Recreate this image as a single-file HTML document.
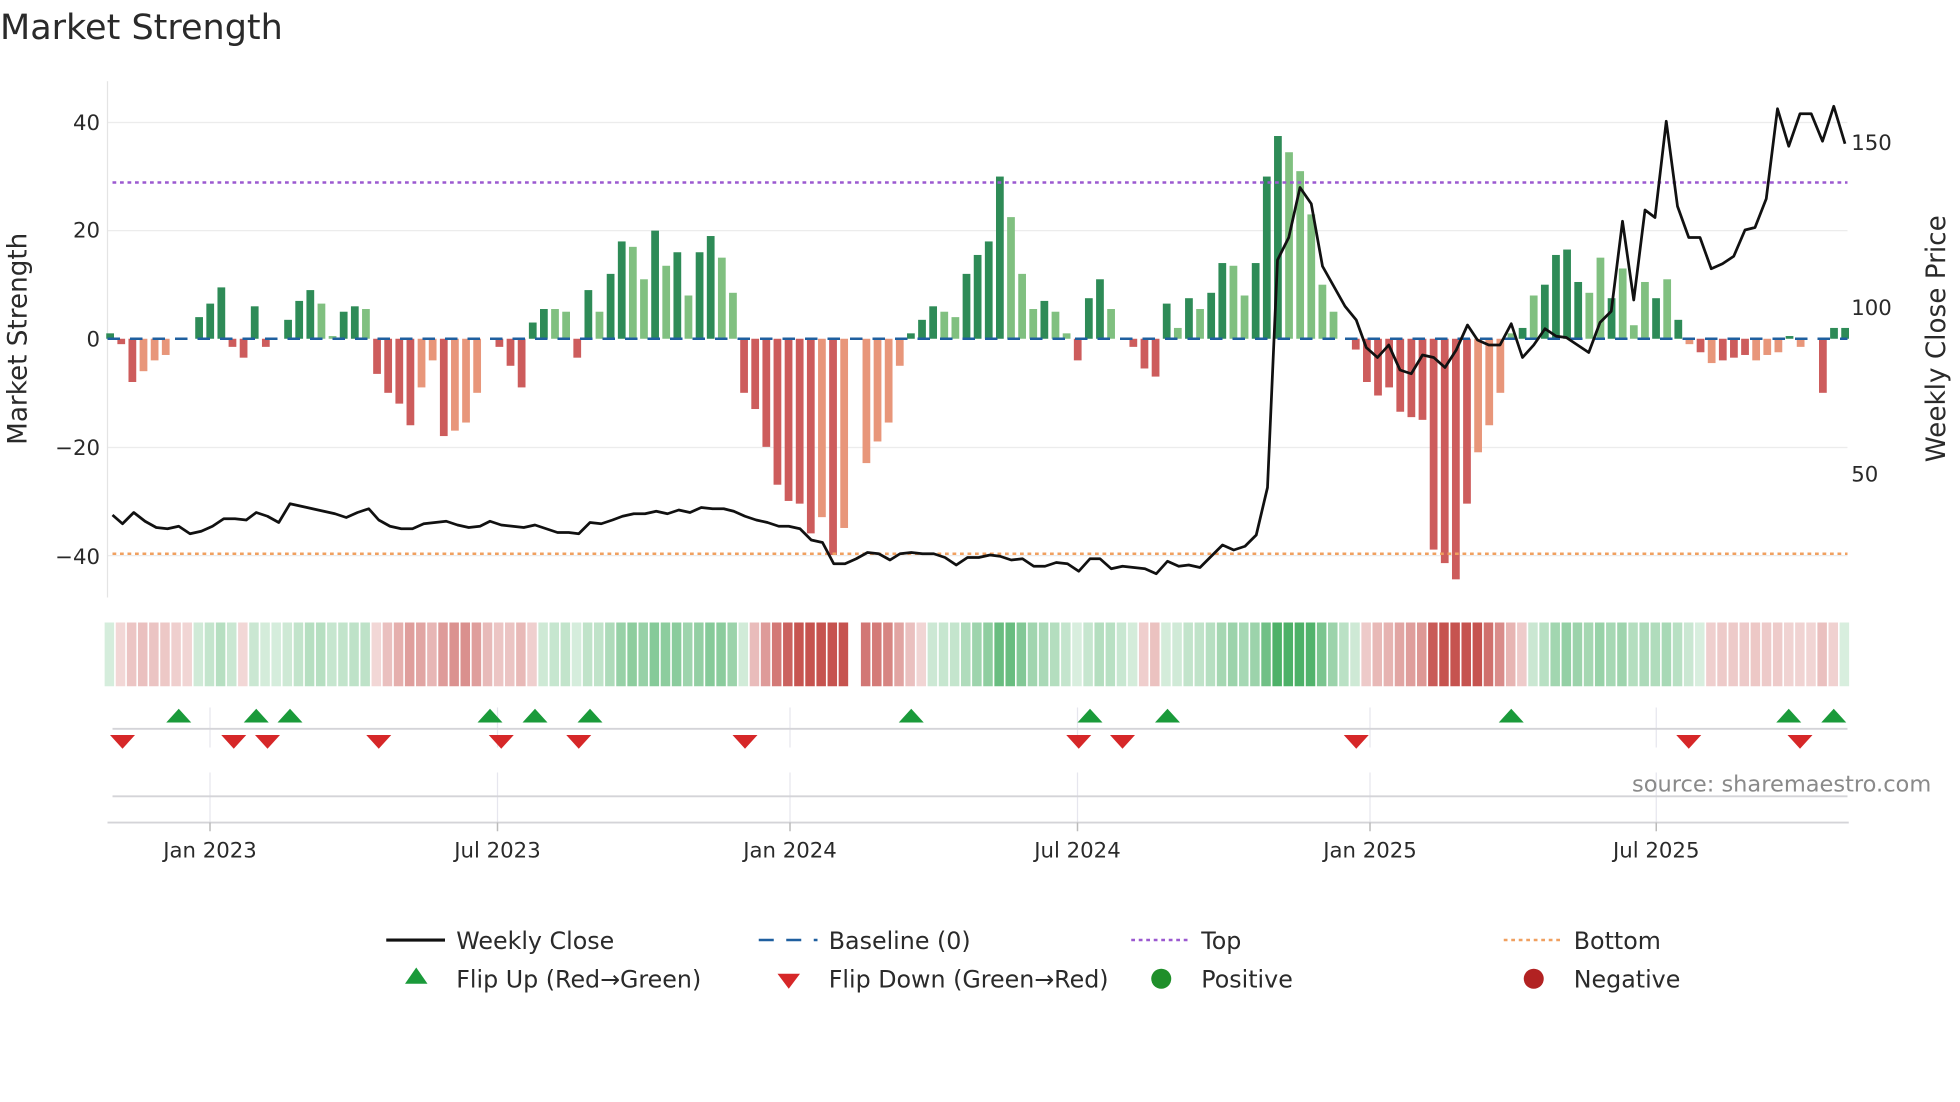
<!DOCTYPE html>
<html><head><meta charset="utf-8">
<style>
html,body{margin:0;padding:0;background:#fff;width:1960px;height:1102px;overflow:hidden}
svg{display:block}
text{font-family:"DejaVu Sans","Liberation Sans",sans-serif;fill:#2a2a2a}
</style></head>
<body>
<svg id="s" width="1960" height="1102" viewBox="0 0 1568 881.6" xmlns="http://www.w3.org/2000/svg">
<rect width="1568" height="882" fill="#fff"/>
<text x="0" y="31" font-size="28" fill="#333">Market Strength</text>
<g stroke="#ececec" stroke-width="1">
<line x1="86" y1="98" x2="1478" y2="98"/>
<line x1="86" y1="184.5" x2="1478" y2="184.5"/>
<line x1="86" y1="358" x2="1478" y2="358"/>
<line x1="86" y1="444.5" x2="1478" y2="444.5"/>
</g>
<line x1="86" y1="65" x2="86" y2="478" stroke="#e4e4e4" stroke-width="1"/>
<g id="bars"></g>
<line x1="86" y1="271" x2="1478" y2="271" stroke="#1f5f9f" stroke-width="2" stroke-dasharray="10,8"/>
<line x1="90" y1="146" x2="1478" y2="146" stroke="#9b59d0" stroke-width="2" stroke-dasharray="3,3"/>
<line x1="90" y1="443" x2="1478" y2="443" stroke="#f0a060" stroke-width="2" stroke-dasharray="3,3"/>
<polyline id="price" fill="none" stroke="#111" stroke-width="2.2" stroke-linejoin="round"/>
<g font-size="17" text-anchor="end">
<text x="80" y="104">40</text><text x="80" y="190">20</text><text x="80" y="277">0</text>
<text x="80" y="364">−20</text><text x="80" y="451">−40</text>
</g>
<g font-size="17">
<text x="1481" y="120">150</text><text x="1481" y="252">100</text><text x="1481" y="385">50</text>
</g>
<text font-size="21" transform="translate(21,271) rotate(-90)" text-anchor="middle">Market Strength</text>
<text font-size="21" transform="translate(1556,271) rotate(-90)" text-anchor="middle">Weekly Close Price</text>
<g id="heat"></g>
<g stroke="#e6e6ee" stroke-width="1">
<line x1="168" y1="566" x2="168" y2="598"/><line x1="398" y1="566" x2="398" y2="598"/>
<line x1="632" y1="566" x2="632" y2="598"/><line x1="862" y1="566" x2="862" y2="598"/>
<line x1="1096" y1="566" x2="1096" y2="598"/><line x1="1325" y1="566" x2="1325" y2="598"/>
<line x1="168" y1="618" x2="168" y2="658"/><line x1="398" y1="618" x2="398" y2="658"/>
<line x1="632" y1="618" x2="632" y2="658"/><line x1="862" y1="618" x2="862" y2="658"/>
<line x1="1096" y1="618" x2="1096" y2="658"/><line x1="1325" y1="618" x2="1325" y2="658"/>
</g>
<line x1="90" y1="583" x2="1478" y2="583" stroke="#d4d4d8" stroke-width="1.5"/>
<line x1="90" y1="637" x2="1478" y2="637" stroke="#d4d4d8" stroke-width="1.5"/>
<line x1="86" y1="658" x2="1479" y2="658" stroke="#d4d4d8" stroke-width="1.5"/>
<g id="tri"></g>
<text x="1545" y="633" font-size="18" text-anchor="end" style="fill:#8a8a8a">source: sharemaestro.com</text>
<g stroke="#bbb" stroke-width="1.2">
<line x1="168" y1="658" x2="168" y2="665"/><line x1="398" y1="658" x2="398" y2="665"/>
<line x1="632" y1="658" x2="632" y2="665"/><line x1="862" y1="658" x2="862" y2="665"/>
<line x1="1096" y1="658" x2="1096" y2="665"/><line x1="1325" y1="658" x2="1325" y2="665"/>
</g>
<g font-size="17" text-anchor="middle">
<text x="168" y="686">Jan 2023</text><text x="398" y="686">Jul 2023</text>
<text x="632" y="686">Jan 2024</text><text x="862" y="686">Jul 2024</text>
<text x="1096" y="686">Jan 2025</text><text x="1325" y="686">Jul 2025</text>
</g>
<g font-size="19">
<line x1="309" y1="752" x2="356" y2="752" stroke="#111" stroke-width="2.5"/>
<text x="365" y="759">Weekly Close</text>
<line x1="607" y1="752" x2="654" y2="752" stroke="#1f5f9f" stroke-width="2" stroke-dasharray="12,10"/>
<text x="663" y="759">Baseline (0)</text>
<line x1="905" y1="752" x2="952" y2="752" stroke="#9b59d0" stroke-width="2" stroke-dasharray="3,3"/>
<text x="961" y="759">Top</text>
<line x1="1203" y1="752" x2="1250" y2="752" stroke="#f0a060" stroke-width="2" stroke-dasharray="3,3"/>
<text x="1259" y="759">Bottom</text>
<polygon points="333,774 342,787 324,787" fill="#1a9a3a"/>
<text x="365" y="790">Flip Up (Red→Green)</text>
<polygon points="622,779 640,779 631,791" fill="#d62728"/>
<text x="663" y="790">Flip Down (Green→Red)</text>
<circle cx="929" cy="783" r="8" fill="#1f8f2a"/>
<text x="961" y="790">Positive</text>
<circle cx="1227" cy="783" r="8" fill="#b22222"/>
<text x="1259" y="790">Negative</text>
</g>
</svg>
<script>
var V=[1,-1,-8,-6,-4,-3,0,0,4,6.5,9.5,-1.5,-3.5,6,-1.5,0,3.5,7,9,6.5,0.5,5,6,5.5,-6.5,-10,-12,-16,-9,-4,-18,-17,-15.5,-10,0,-1.5,-5,-9,3,5.5,5.5,5,-3.5,9,5,12,18,17,11,20,13.5,16,8,16,19,15,8.5,-10,-13,-20,-27,-30,-30.5,-36,-33,-40,-35,0,-23,-19,-15.5,-5,1,3.5,6,5,4,12,15.5,18,30,22.5,12,5.5,7,5,1,-4,7.5,11,5.5,0,-1.5,-5.5,-7,6.5,2,7.5,5.5,8.5,14,13.5,8,14,30,37.5,34.5,31,23,10,5,0,-2,-8,-10.5,-9,-13.5,-14.5,-15,-39,-41.5,-44.5,-30.5,-21,-16,-10,1,2,8,10,15.5,16.5,10.5,8.5,15,7.5,13,2.5,10.5,7.5,11,3.5,-1,-2.5,-4.5,-4,-3.5,-3,-4,-3,-2.5,0.5,-1.5,0,-10,2,2];
var L=[0,0,0,1,1,1,0,0,0,0,0,0,0,0,0,0,0,0,0,1,1,0,0,1,0,0,0,0,1,1,0,1,1,1,0,0,0,0,0,0,1,1,0,0,1,0,0,1,1,0,1,0,1,0,0,1,1,0,0,0,0,0,0,0,1,0,1,0,1,1,1,1,0,0,0,1,1,0,0,0,0,1,1,1,0,1,1,0,0,0,1,0,0,0,0,0,1,0,1,0,0,1,1,0,0,0,1,1,1,1,1,0,0,0,0,0,0,0,0,0,0,0,0,1,1,1,1,0,1,0,0,0,0,1,1,0,1,1,1,0,1,0,1,0,1,0,0,0,1,1,1,0,1,1,0,0,0,0,0,1];
var ns="http://www.w3.org/2000/svg",b=document.getElementById('bars'),h=document.getElementById('heat');
function el(t,a,p){var e=document.createElementNS(ns,t);for(var k in a)e.setAttribute(k,a[k]);p.appendChild(e);return e;}
var sm=0,dx=(1476-88)/(V.length-1);
for(var i=0;i<V.length;i++){var x=88+i*dx,v=V[i];
 if(v!==0){var y=v>0?271-v*4.325:271;var c=v>0?(L[i]?'#80c080':'#2e8b57'):(L[i]?'#e8967a':'#cd5c5c');
 el('rect',{x:x-3,y:y,width:6.2,height:Math.abs(v)*4.325,fill:c},b);}
 sm=sm*0.5+v*0.5;
 if(i===67)continue;
 var a=Math.min(0.9,0.2+Math.abs(sm)/40*1.0);
 el('rect',{x:x-4.3,y:498,width:7.6,height:51,fill:sm>=0?'#3aa858':'#c0403c','fill-opacity':a.toFixed(2)},h);}
var P="90,412 98,419 107,410 116,417 125,422 134,423 143,421 152,427 161,425 170,421 179,415 188,415 197,416 205,410 214,413 223,418 232,403 241,405 250,407 259,409 268,411 277,414 286,410 295,407 303,416 312,421 321,423 330,423 339,419 348,418 357,417 366,420 375,422 384,421 392,417 401,420 410,421 419,422 428,420 437,423 446,426 455,426 463,427 472,418 481,419 490,416 498,413 507,411 516,411 525,409 534,411 543,408 552,410 561,406 570,407 579,407 587,409 596,413 605,416 614,418 623,421 631,421 640,423 649,432 658,434 667,451 676,451 685,447 694,442 703,443 712,448 720,443 729,442 738,443 747,443 756,446 765,452 774,446 783,446 792,444 800,445 809,448 818,447 827,453 836,453 845,450 854,451 863,457 872,447 880,447 889,455 898,453 907,454 916,455 925,459 934,449 943,453 951,452 960,454 969,445 978,436 987,440 996,437 1005,428 1014,390 1022,208 1031,190 1040,150 1049,163 1058,213 1067,229 1076,245 1085,256 1093,278 1102,286 1111,276 1120,296 1129,299 1138,284 1147,286 1156,294 1165,280 1174,260 1182,272 1191,276 1200,276 1209,259 1218,286 1227,276 1236,263 1245,269 1253,270 1262,276 1271,282 1280,258 1289,249 1298,177 1307,240 1316,168 1324,174 1333,97 1342,165 1351,190 1360,190 1369,215 1378,211 1387,205 1396,184 1404,182 1413,159 1422,87 1431,117 1440,91 1449,91 1458,113 1467,85 1476,115";
document.getElementById('price').setAttribute('points',P);
var t=document.getElementById('tri');
[143,205,232,392,428,472,729,872,934,1209,1431,1467].forEach(function(x){el('polygon',{points:(x)+',567 '+(x+10)+',578 '+(x-10)+',578',fill:'#1a9a3a'},t);});
[98,187,214,303,401,463,596,863,898,1085,1351,1440].forEach(function(x){el('polygon',{points:(x-10)+',588 '+(x+10)+',588 '+x+',599',fill:'#d62728'},t);});
</script>
</body></html>
